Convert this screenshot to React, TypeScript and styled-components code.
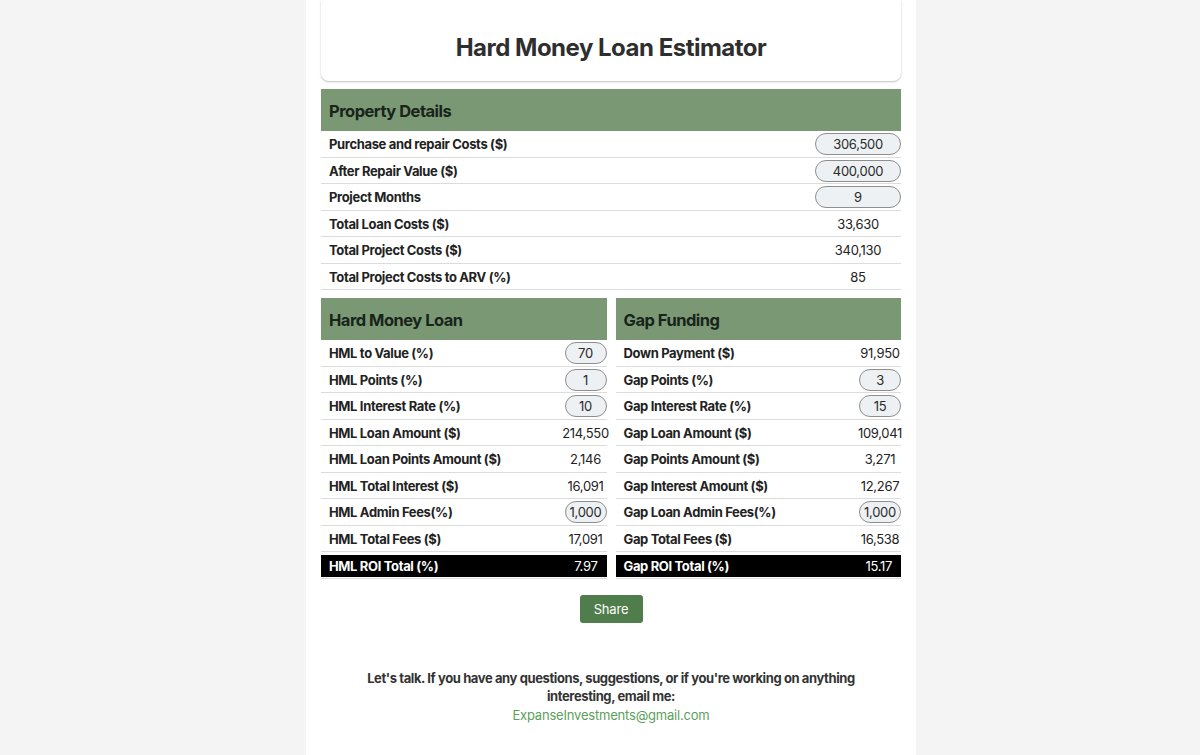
import React from "react";
import styled, { createGlobalStyle } from "styled-components";

const Global = createGlobalStyle`
  html, body { margin: 0; padding: 0; background: #f4f4f4; }
  body { font-family: Inter, "Noto Sans", "Liberation Sans", sans-serif; color: #222; }
  * { box-sizing: border-box; }
`;

const Page = styled.div`
  display: flex;
  justify-content: center;
  padding-left: 22px;
  min-height: 755px;
`;

const Sheet = styled.main`
  width: 610px;
  background: #fff;
  padding: 0 15px 40px;
  display: flex;
  flex-direction: column;
`;

const HeaderCard = styled.header`
  padding: 32px 0 18px;
  border-radius: 0 0 8px 8px;
  box-shadow: 0 1px 2px rgba(0, 0, 0, 0.25);
  text-align: center;
`;

const Title = styled.h1`
  margin: 0;
  font-size: 24px;
  line-height: 31px;
  font-weight: 700;
  letter-spacing: -0.5px;
  color: #2e2e2e;
`;

const Section = styled.section<{ $flush?: boolean }>`
  margin-top: ${(p) => (p.$flush ? "0" : "8px")};
  display: flex;
  flex-direction: column;
`;

const Columns = styled.div`
  margin-top: 8px;
  display: grid;
  grid-template-columns: 1fr 1fr;
  gap: 9px;
`;

const SectionHead = styled.h2`
  margin: 0;
  height: 42px;
  display: flex;
  align-items: center;
  padding: 1px 0 0 8px;
  background: #7b9875;
  color: #18241a;
  font-size: 16.5px;
  font-weight: 700;
  letter-spacing: -0.5px;
`;

const Row = styled.div<{ $dark?: boolean }>`
  display: flex;
  align-items: center;
  height: 26.5px;
  border-bottom: 1px solid #dcdcdc;
  padding: ${(p) => (p.$dark ? "3px 0 1px" : "1px 0 0")};
  background: ${(p) => (p.$dark ? "#000" : "transparent")};
  background-clip: content-box;
  color: ${(p) => (p.$dark ? "#fff" : "#222")};
`;

const Label = styled.span`
  flex: 1;
  padding-left: 8px;
  font-size: 13px;
  font-weight: 700;
  letter-spacing: -0.35px;
  white-space: nowrap;
`;

const Value = styled.span<{ $w: number; $right?: boolean }>`
  width: ${(p) => p.$w}px;
  padding-right: ${(p) => (p.$right ? "9px" : "0")};
  font-size: 13px;
  letter-spacing: -0.3px;
  white-space: nowrap;
  display: flex;
  justify-content: ${(p) => (p.$right ? "flex-end" : "center")};
`;

const Field = styled.input<{ $w: number }>`
  width: ${(p) => p.$w}px;
  height: 22px;
  border: 1px solid #8e8e8e;
  border-radius: 12px;
  background: #edf1f4;
  font-family: inherit;
  font-size: 13px;
  letter-spacing: -0.3px;
  color: #2a2a2a;
  text-align: center;
  padding: 0;
  outline: none;
`;

const ShareButton = styled.button`
  align-self: center;
  margin-top: 16px;
  width: 63px;
  height: 28px;
  border: none;
  border-radius: 3px;
  background: #4f7d4b;
  color: #fff;
  font-family: inherit;
  font-size: 13px;
  letter-spacing: -0.2px;
`;

const Footer = styled.footer`
  margin-top: 46px;
  text-align: center;
  font-size: 13px;
  line-height: 18.5px;
`;

const FooterText = styled.p`
  margin: 0 auto;
  max-width: 500px;
  font-weight: 700;
  letter-spacing: -0.4px;
  color: #333;
`;

const Email = styled.a`
  display: block;
  color: #5c9f5c;
  letter-spacing: -0.2px;
  text-decoration: none;
`;

type Item = { label: string; value: string; input?: boolean };

const property: Item[] = [
  { label: "Purchase and repair Costs ($)", value: "306,500", input: true },
  { label: "After Repair Value ($)", value: "400,000", input: true },
  { label: "Project Months", value: "9", input: true },
  { label: "Total Loan Costs ($)", value: "33,630" },
  { label: "Total Project Costs ($)", value: "340,130" },
  { label: "Total Project Costs to ARV (%)", value: "85" },
];

const hml: Item[] = [
  { label: "HML to Value (%)", value: "70", input: true },
  { label: "HML Points (%)", value: "1", input: true },
  { label: "HML Interest Rate (%)", value: "10", input: true },
  { label: "HML Loan Amount ($)", value: "214,550" },
  { label: "HML Loan Points Amount ($)", value: "2,146" },
  { label: "HML Total Interest ($)", value: "16,091" },
  { label: "HML Admin Fees(%)", value: "1,000", input: true },
  { label: "HML Total Fees ($)", value: "17,091" },
];

const gap: Item[] = [
  { label: "Down Payment ($)", value: "91,950" },
  { label: "Gap Points (%)", value: "3", input: true },
  { label: "Gap Interest Rate (%)", value: "15", input: true },
  { label: "Gap Loan Amount ($)", value: "109,041" },
  { label: "Gap Points Amount ($)", value: "3,271" },
  { label: "Gap Interest Amount ($)", value: "12,267" },
  { label: "Gap Loan Admin Fees(%)", value: "1,000", input: true },
  { label: "Gap Total Fees ($)", value: "16,538" },
];

function Rows({ items, w }: { items: Item[]; w: number }) {
  return (
    <>
      {items.map((it) => (
        <Row key={it.label}>
          <Label>{it.label}</Label>
          {it.input ? (
            <Field $w={w} defaultValue={it.value} />
          ) : (
            <Value $w={w}>{it.value}</Value>
          )}
        </Row>
      ))}
    </>
  );
}

export default function App() {
  return (
    <>
      <Global />
      <Page>
        <Sheet>
          <HeaderCard>
            <Title>Hard Money Loan Estimator</Title>
          </HeaderCard>
          <Section>
            <SectionHead>Property Details</SectionHead>
            <Rows items={property} w={86} />
          </Section>
          <Columns>
            <Section $flush>
              <SectionHead>Hard Money Loan</SectionHead>
              <Rows items={hml} w={42} />
              <Row $dark>
                <Label>HML ROI Total (%)</Label>
                <Value $w={60} $right>7.97</Value>
              </Row>
            </Section>
            <Section $flush>
              <SectionHead>Gap Funding</SectionHead>
              <Rows items={gap} w={42} />
              <Row $dark>
                <Label>Gap ROI Total (%)</Label>
                <Value $w={60} $right>15.17</Value>
              </Row>
            </Section>
          </Columns>
          <ShareButton>Share</ShareButton>
          <Footer>
            <FooterText>
              Let's talk. If you have any questions, suggestions, or if you're working on anything
              interesting, email me:
            </FooterText>
            <Email href="#">ExpanseInvestments@gmail.com</Email>
          </Footer>
        </Sheet>
      </Page>
    </>
  );
}
